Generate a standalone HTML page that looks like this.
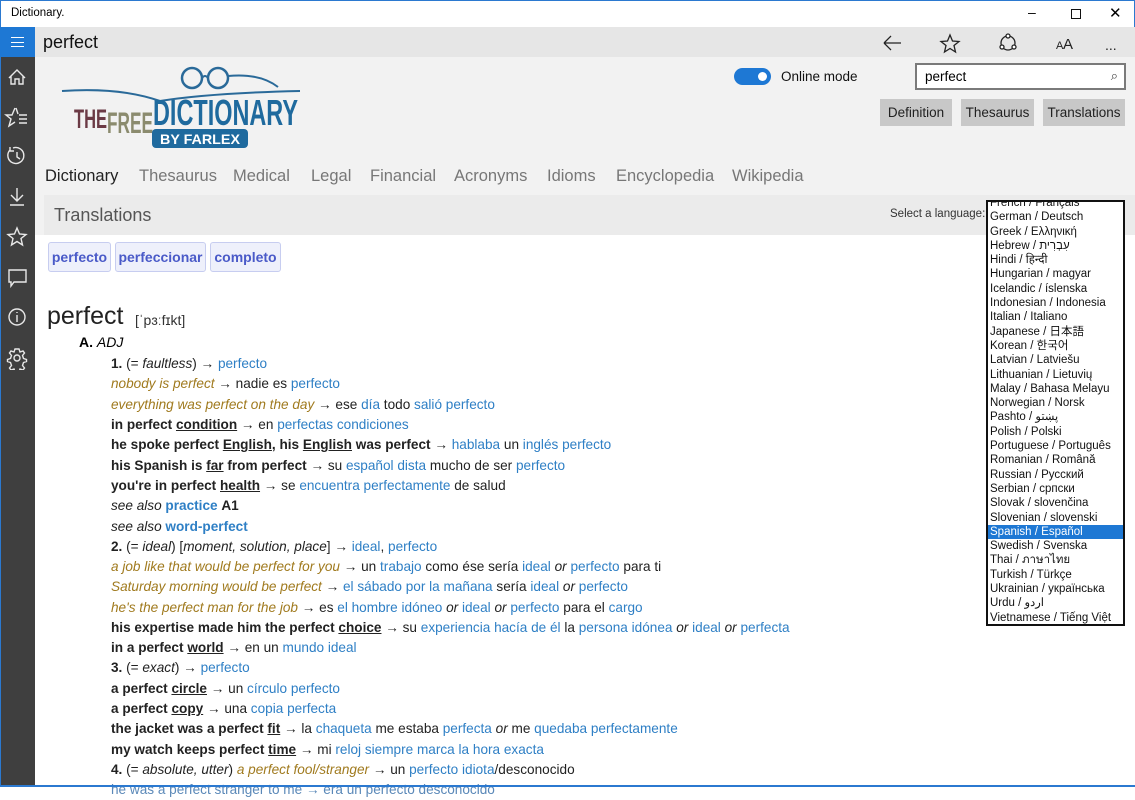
<!DOCTYPE html>
<html><head><meta charset="utf-8"><style>
*{margin:0;padding:0;box-sizing:border-box}
body{width:1135px;height:787px;overflow:hidden;background:#fff;font-family:"Liberation Sans",Arial,sans-serif;position:relative}
.abs{position:absolute}
.title{left:0;top:0;width:1135px;height:27px;background:#fff;border-top:1px solid #2b79d0;border-left:1px solid #2b79d0;border-right:1px solid #2b79d0}
.side{left:0;top:27px;width:35px;height:760px;background:#3f3f3f;border-left:1px solid #2b79d0}
.ham{left:0;top:27px;width:35px;height:30px;background:#1e78d4}
.topbar{left:35px;top:27px;width:1100px;height:30px;background:#e6e6e6}
.hdr{left:35px;top:57px;width:1100px;height:178px;background:#f2f2f2}
.main{font-size:13.6px;color:#222}
.ln{position:absolute;left:111px;white-space:nowrap;font-size:13.6px;line-height:20px}
.b{font-weight:bold;color:#222}
.u{text-decoration:underline}
.l{color:#2e7fc5}
.ex{color:#a07a1e;font-style:italic}
.btn{top:99px;height:27px;background:#c8c8c8;font-size:13.5px;color:#222;text-align:center;line-height:27px}
.nav{top:167px;font-size:16.5px;color:#777}
.tag{top:242px;height:30px;border:1px solid #c7cdf0;background:#eef0fb;border-radius:3px;color:#4a5ac8;font-weight:bold;font-size:14px;line-height:28px;text-align:center}
.dd{left:986px;top:200px;width:139px;height:426px;border:2px solid #111;background:#fff;overflow:hidden}
.dd div{height:14.3px;font-size:11.5px;line-height:14px;padding-left:2px;color:#111;white-space:nowrap}
</style></head><body>
<div class="abs title"><span style="position:absolute;left:10px;top:6px;font-size:11.5px">Dictionary.</span>
<span style="position:absolute;left:1027px;top:3px;font-size:14px">–</span>
<span style="position:absolute;left:1070px;top:8px;width:10px;height:10px;border:1px solid #111"></span>
<span style="position:absolute;left:1108px;top:3px;font-size:15px">✕</span></div>
<div class="abs side"></div>
<div class="abs ham"><div style="position:absolute;left:11px;top:10px;width:13px;height:10px;border-top:1.5px solid #fff;border-bottom:1.5px solid #fff"></div><div style="position:absolute;left:11px;top:14.5px;width:13px;border-top:1.5px solid #fff"></div></div>
<svg class="abs" style="left:0;top:60px" width="35" height="310" fill="none" stroke="#e8e8e8" stroke-width="1.4">
<path d="M9 18 L17 10 L25 18 M11 16 V24 H15 V19 H19 V24 H23 V16"/>
<path d="M15 48 L12 55 L6 55 L11 59 L9 66 L15 62 M19 55 H27 M19 59 H27 M19 63 H27 M16 48 L18 54"/>
<path d="M10 90 A8 8 0 1 0 13 88 M10 87 V91 H14 M17 92 V97 L20 99"/>
<path d="M17 128 V141 M11 135 L17 141 L23 135 M10 145 H24"/>
<path d="M17 168 L19.5 174 L26 174.5 L21 178.5 L22.5 185 L17 181.5 L11.5 185 L13 178.5 L8 174.5 L14.5 174 Z"/>
<path d="M9 210 H26 V222 H14 L11 226 V222 H9 Z"/>
<circle cx="17" cy="257" r="8"/><path d="M17 255 V262 M17 252 V253"/>
<circle cx="17" cy="298" r="3"/><path d="M17 289 l2 0 1 3 3-1 1.5 2-2 2.5 1 3 3 1v2l-3 1-1 3 2 2.5-1.5 2-3-1-1 3h-2h-2l-1-3-3 1-1.5-2 2-2.5-1-3-3-1v-2l3-1 1-3-2-2.5 1.5-2 3 1 1-3z"/>
</svg>
<div class="abs topbar"><span style="position:absolute;left:8px;top:5px;font-size:18px;color:#111">perfect</span></div>
<svg class="abs" style="left:880px;top:30px" width="250" height="26" fill="none" stroke="#222" stroke-width="1.3">
<path d="M4 13 H21 M4 13 L11 6 M4 13 L11 20"/>
<path d="M70 5 L72.5 11 L79 11.5 L74 15.5 L75.5 22 L70 18.5 L64.5 22 L66 15.5 L61 11.5 L67.5 11 Z"/>
<circle cx="128" cy="13" r="7"/><circle cx="128" cy="6" r="2" fill="#fff"/><circle cx="122" cy="17" r="2" fill="#fff"/><circle cx="134" cy="17" r="2" fill="#fff"/>
<text x="176" y="19" font-size="11" fill="#222" stroke="none">A</text><text x="183" y="19" font-size="15" fill="#222" stroke="none">A</text>
<text x="225" y="20" font-size="14" fill="#222" stroke="none">...</text>
</svg>
<div class="abs hdr"></div>
<svg class="abs" style="left:60px;top:65px" width="250" height="90">
<path d="M2 26 Q60 22 100 36 Q150 28 240 26" fill="none" stroke="#2a6a99" stroke-width="2"/>
<circle cx="132" cy="13" r="10" fill="none" stroke="#2a6a99" stroke-width="2.5"/><circle cx="158" cy="13" r="10" fill="none" stroke="#2a6a99" stroke-width="2.5"/>
<path d="M142 13 Q145 9 148 13 M168 11 Q200 8 218 22" fill="none" stroke="#2a6a99" stroke-width="2"/>
<text x="14" y="63" font-size="27" font-weight="bold" fill="#6b3a45" textLength="33" lengthAdjust="spacingAndGlyphs">THE</text>
<text x="47" y="68" font-size="30" font-weight="bold" fill="#8b8b6e" textLength="46" lengthAdjust="spacingAndGlyphs">FREE</text>
<text x="93" y="60" font-size="36" font-weight="bold" fill="#1f6a9e" textLength="145" lengthAdjust="spacingAndGlyphs">DICTIONARY</text>
<rect x="92" y="64" width="96" height="19" rx="4" fill="#1f6a9e"/>
<text x="140" y="79" font-size="14" font-weight="bold" fill="#fff" text-anchor="middle" textLength="80" lengthAdjust="spacingAndGlyphs">BY FARLEX</text>
</svg>
<div class="abs" style="left:734px;top:68px;width:37px;height:17px;border-radius:9px;background:#1e78d4"><div style="position:absolute;right:4px;top:4px;width:9px;height:9px;border-radius:5px;background:#fff"></div></div>
<div class="abs" style="left:781px;top:69px;font-size:13.5px;color:#111">Online mode</div>
<div class="abs" style="left:915px;top:63px;width:211px;height:27px;border:2px solid #7a7a7a;background:#fff"><span style="position:absolute;left:8px;top:4px;font-size:13.5px">perfect</span><span style="position:absolute;right:6px;top:3px;font-size:13px;color:#444">⌕</span></div>
<div class="abs btn" style="left:880px;width:72px">Definition</div>
<div class="abs btn" style="left:961px;width:73px">Thesaurus</div>
<div class="abs btn" style="left:1043px;width:82px">Translations</div>
<div class="abs nav" style="left:45px;color:#222">Dictionary</div>
<div class="abs nav" style="left:139px">Thesaurus</div>
<div class="abs nav" style="left:233px">Medical</div>
<div class="abs nav" style="left:311px">Legal</div>
<div class="abs nav" style="left:370px">Financial</div>
<div class="abs nav" style="left:454px">Acronyms</div>
<div class="abs nav" style="left:547px">Idioms</div>
<div class="abs nav" style="left:616px">Encyclopedia</div>
<div class="abs nav" style="left:732px">Wikipedia</div>
<div class="abs" style="left:44px;top:195px;width:1091px;height:40px;background:#ebebeb"><span style="position:absolute;left:10px;top:10px;font-size:18px;color:#555">Translations</span><span style="position:absolute;left:846px;top:13px;font-size:11.5px;color:#333">Select a language:</span></div>
<div class="abs" style="left:44px;top:235px;width:1091px;height:552px;background:#fff"></div>
<div class="abs tag" style="left:48px;width:63px">perfecto</div>
<div class="abs tag" style="left:115px;width:91px">perfeccionar</div>
<div class="abs tag" style="left:210px;width:71px">completo</div>
<div class="abs" style="left:47px;top:302px;font-size:25px;color:#222">perfect</div>
<div class="abs" style="left:135px;top:312px;font-size:14px;color:#333">[ˈpɜːfɪkt]</div>
<div class="abs" style="left:79px;top:334px;font-size:14px"><b>A.</b> <i>ADJ</i></div>
<div class="main">
<div class="ln" style="top:354px"><b>1.</b> (= <i>faultless</i>) → <span class="l">perfecto</span></div>
<div class="ln" style="top:374px"><span class="ex">nobody is perfect</span> → nadie es <span class="l">perfecto</span></div>
<div class="ln" style="top:395px"><span class="ex">everything was perfect on the day</span> → ese <span class="l">día</span> todo <span class="l">salió perfecto</span></div>
<div class="ln" style="top:415px"><span class="b">in perfect <span class="u">condition</span></span> → en <span class="l">perfectas condiciones</span></div>
<div class="ln" style="top:435px"><span class="b">he spoke perfect <span class="u">English</span>, his <span class="u">English</span> was perfect</span> → <span class="l">hablaba</span> un <span class="l">inglés perfecto</span></div>
<div class="ln" style="top:456px"><span class="b">his Spanish is <span class="u">far</span> from perfect</span> → su <span class="l">español dista</span> mucho de ser <span class="l">perfecto</span></div>
<div class="ln" style="top:476px"><span class="b">you're in perfect <span class="u">health</span></span> → se <span class="l">encuentra perfectamente</span> de salud</div>
<div class="ln" style="top:496px"><i>see also</i> <b class="l">practice</b> <b>A1</b></div>
<div class="ln" style="top:517px"><i>see also</i> <b class="l">word-perfect</b></div>
<div class="ln" style="top:537px"><b>2.</b> (= <i>ideal</i>) [<i>moment, solution, place</i>] → <span class="l">ideal</span>, <span class="l">perfecto</span></div>
<div class="ln" style="top:557px"><span class="ex">a job like that would be perfect for you</span> → un <span class="l">trabajo</span> como ése sería <span class="l">ideal</span> <i>or</i> <span class="l">perfecto</span> para ti</div>
<div class="ln" style="top:577px"><span class="ex">Saturday morning would be perfect</span> → <span class="l">el sábado por la mañana</span> sería <span class="l">ideal</span> <i>or</i> <span class="l">perfecto</span></div>
<div class="ln" style="top:598px"><span class="ex">he's the perfect man for the job</span> → es <span class="l">el hombre idóneo</span> <i>or</i> <span class="l">ideal</span> <i>or</i> <span class="l">perfecto</span> para el <span class="l">cargo</span></div>
<div class="ln" style="top:618px"><span class="b">his expertise made him the perfect <span class="u">choice</span></span> → su <span class="l">experiencia hacía de él</span> la <span class="l">persona idónea</span> <i>or</i> <span class="l">ideal</span> <i>or</i> <span class="l">perfecta</span></div>
<div class="ln" style="top:638px"><span class="b">in a perfect <span class="u">world</span></span> → en un <span class="l">mundo ideal</span></div>
<div class="ln" style="top:658px"><b>3.</b> (= <i>exact</i>) → <span class="l">perfecto</span></div>
<div class="ln" style="top:679px"><span class="b">a perfect <span class="u">circle</span></span> → un <span class="l">círculo perfecto</span></div>
<div class="ln" style="top:699px"><span class="b">a perfect <span class="u">copy</span></span> → una <span class="l">copia perfecta</span></div>
<div class="ln" style="top:719px"><span class="b">the jacket was a perfect <span class="u">fit</span></span> → la <span class="l">chaqueta</span> me estaba <span class="l">perfecta</span> <i>or</i> me <span class="l">quedaba perfectamente</span></div>
<div class="ln" style="top:740px"><span class="b">my watch keeps perfect <span class="u">time</span></span> → mi <span class="l">reloj siempre marca la hora exacta</span></div>
<div class="ln" style="top:760px"><b>4.</b> (= <i>absolute, utter</i>) <span class="ex">a perfect fool/stranger</span> → un <span class="l">perfecto idiota</span>/desconocido</div>
<div class="ln" style="top:780px;color:#5a88b8">he was a perfect stranger to me → era un perfecto desconocido</div>
</div>
<div class="abs" style="left:0;top:785px;width:1135px;height:2px;background:#2b79d0"></div>
<div class="abs dd" style="font-family:'Liberation Sans','Noto Sans CJK JP',sans-serif">
<div style="margin-top:-6px">French / Français</div><div>German / Deutsch</div><div>Greek / Ελληνική</div><div>Hebrew / עִבְרִית</div><div>Hindi / हिन्दी</div><div>Hungarian / magyar</div><div>Icelandic / íslenska</div><div>Indonesian / Indonesia</div><div>Italian / Italiano</div><div>Japanese / 日本語</div><div>Korean / 한국어</div><div>Latvian / Latviešu</div><div>Lithuanian / Lietuvių</div><div>Malay / Bahasa Melayu</div><div>Norwegian / Norsk</div><div>Pashto / پښتو</div><div>Polish / Polski</div><div>Portuguese / Português</div><div>Romanian / Română</div><div>Russian / Русский</div><div>Serbian / српски</div><div>Slovak / slovenčina</div><div>Slovenian / slovenski</div><div style="background:#1e78d4;color:#fff">Spanish / Español</div><div>Swedish / Svenska</div><div>Thai / ภาษาไทย</div><div>Turkish / Türkçe</div><div>Ukrainian / українська</div><div>Urdu / اردو</div><div>Vietnamese / Tiếng Việt</div>
</div>
</body></html>
